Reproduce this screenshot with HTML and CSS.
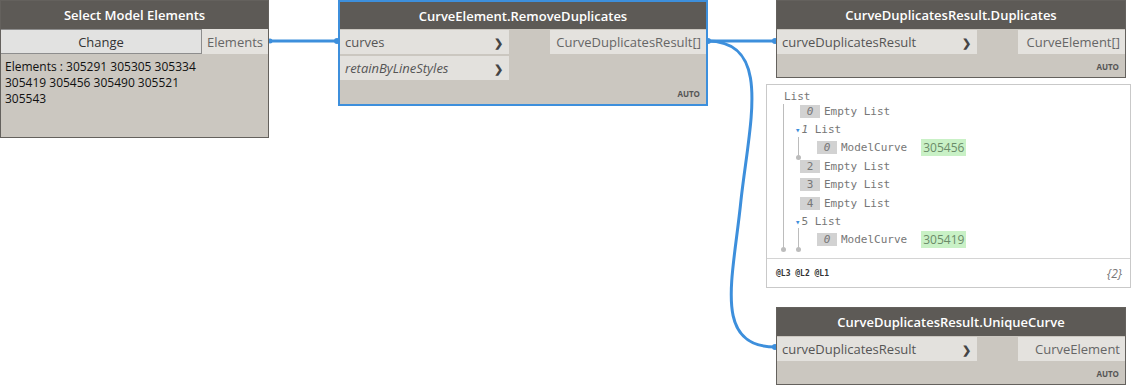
FILE: index.html
```html
<!DOCTYPE html>
<html>
<head>
    <link rel="stylesheet" href="styles.css">
    <title>Dynamo graph</title>
</head>
<body>
<div class="canvas">

    <svg class="wires" width="1133" height="385">
        <path d="M268 41 L338 41" />
        <path d="M707 41 L776 41" />
        <path d="M707 41 C 772 41, 750 120, 741 200 C 733 280, 712 347, 776 347" />
        <circle cx="270" cy="41" r="2.5" />
        <circle cx="337" cy="41" r="3" />
        <circle cx="708" cy="41" r="3" />
        <circle cx="775" cy="41" r="3" />
        <circle cx="775" cy="347" r="3" />
    </svg>

    <!-- select model elements -->
    <div class="node sel-node">
        <div class="node-head">Select Model Elements</div>
        <div class="sel-row">
            <div class="change-btn">Change</div>
            <div class="port-out">Elements</div>
        </div>
        <div class="sel-body">Elements : 305291 305305 305334<br>305419 305456 305490 305521<br>305543</div>
    </div>

    <!-- remove duplicates, selected -->
    <div class="node rd-node">
        <div class="node-head">CurveElement.RemoveDuplicates</div>
        <div class="ports">
            <div class="ins">
                <div class="port-in">curves <span class="chev">&#x276F;</span></div>
                <div class="port-in italic">retainByLineStyles <span class="chev">&#x276F;</span></div>
            </div>
            <div class="outs">
                <div class="port-out">CurveDuplicatesResult[]</div>
            </div>
        </div>
        <div class="auto">AUTO</div>
    </div>

    <div class="node dup-node">
        <div class="node-head">CurveDuplicatesResult.Duplicates</div>
        <div class="ports">
            <div class="ins small">
                <div class="port-in">curveDuplicatesResult <span class="chev">&#x276F;</span></div>
            </div>
            <div class="outs small">
                <div class="port-out">CurveElement[]</div>
            </div>
        </div>
        <div class="auto">AUTO</div>
    </div>

    <!-- watch preview under duplicates -->
    <div class="watch">
        <div class="tree">
            <div class="wl title-l">List</div>
            <div class="vline l1"></div>
            <div class="wl lvl1"><span class="idx it">0</span>Empty List</div>
            <div class="wl lvl1 sub"><span class="tri">&#x25BE;</span><i>1</i>&nbsp;List</div>
            <div class="vline l2a"></div>
            <div class="wl lvl2"><span class="idx it">0</span>ModelCurve<span class="val">305456</span></div>
            <div class="wl lvl1"><span class="idx">2</span>Empty List</div>
            <div class="wl lvl1"><span class="idx">3</span>Empty List</div>
            <div class="wl lvl1"><span class="idx">4</span>Empty List</div>
            <div class="wl lvl1 sub"><span class="tri">&#x25BE;</span>5&nbsp;List</div>
            <div class="vline l2b"></div>
            <div class="wl lvl2"><span class="idx it">0</span>ModelCurve<span class="val">305419</span></div>
        </div>
        <div class="watch-foot">
            <span class="levels">@L3 @L2 @L1</span>
            <span class="count">{2}</span>
        </div>
    </div>

    <div class="node uniq-node">
        <div class="node-head">CurveDuplicatesResult.UniqueCurve</div>
        <div class="ports">
            <div class="ins small">
                <div class="port-in">curveDuplicatesResult <span class="chev">&#x276F;</span></div>
            </div>
            <div class="outs small">
                <div class="port-out">CurveElement</div>
            </div>
        </div>
        <div class="auto">AUTO</div>
    </div>

</div>
</body>
</html>
```

FILE: styles.css
```css
body{
    margin: 0;
    background-color: white;
    font-family: "Open Sans", "Noto Sans", sans-serif;
}

.canvas{
    position: relative;
    width: 1133px;
    height: 385px;
    overflow: hidden;
}

.wires{
    position: absolute;
    left: 0;
    top: 0;
}
.wires path{
    fill: none;
    stroke: #3d8fdc;
    stroke-width: 3;
}
.wires circle{
    fill: #3d8fdc;
}

/* nodes */
.node{
    position: absolute;
    box-sizing: border-box;
    background-color: #cbc7c0;
    border: 1px solid #64615d;
    display: flex;
    flex-direction: column;
}

.node-head{
    height: 28px;
    background-color: #5d5a56;
    color: white;
    font-weight: 600;
    font-size: 13px;
    display: flex;
    align-items: center;
    justify-content: center;
    flex-shrink: 0;
}

.sel-node{
    left: 0;
    top: 0;
    width: 269px;
    height: 138px;
}
.sel-row{
    display: flex;
    height: 25px;
}
.change-btn{
    flex: 1;
    background-color: #e2e2e1;
    border: 1px solid #8d8d8d;
    border-left: none;
    display: flex;
    align-items: center;
    justify-content: center;
    font-size: 13px;
    color: #333;
}
.sel-row .port-out{
    width: 66px;
    height: 25px;
}
.sel-body{
    padding: 5px 4px;
    font-size: 12px;
    line-height: 16px;
    color: #111;
}

.port-out{
    background-color: #e4e2de;
    color: #666;
    font-size: 13px;
    height: 24px;
    display: flex;
    align-items: center;
    justify-content: flex-end;
    padding-right: 5px;
    box-sizing: border-box;
}

.ports{
    display: flex;
    justify-content: space-between;
    margin-top: 1px;
}
.ins{
    width: 169px;
    display: flex;
    flex-direction: column;
    gap: 2px;
}
.outs{
    width: 156px;
}
.ins.small{
    width: 200px;
}
.outs.small{
    width: 107px;
}

.port-in{
    height: 24px;
    background-color: #e3e1dd;
    color: #555;
    font-size: 13px;
    display: flex;
    align-items: center;
    justify-content: space-between;
    padding: 0 6px 0 5px;
}
.italic{
    font-style: italic;
}
.chev{
    font-style: normal;
    font-weight: bold;
    font-size: 11px;
    color: #444;
}

.auto{
    margin-top: auto;
    align-self: flex-end;
    font-size: 8px;
    font-weight: bold;
    color: #555;
    padding: 0 6px 5px 0;
}

.rd-node{
    left: 338px;
    top: 0;
    width: 370px;
    height: 106px;
    border: 2px solid #3d8fdc;
}
.rd-node .node-head{
    height: 27px;
}

.dup-node{
    left: 776px;
    top: 0;
    width: 350px;
    height: 78px;
}
.uniq-node{
    left: 776px;
    top: 307px;
    width: 350px;
    height: 78px;
}

/* watch */
.watch{
    position: absolute;
    left: 766px;
    top: 84px;
    width: 365px;
    height: 204px;
    box-sizing: border-box;
    border: 1px solid #c9c9c9;
    background: white;
    display: flex;
    flex-direction: column;
}
.tree{
    position: relative;
    height: 173px;
    border-bottom: 1px solid #d4d4d4;
    font-family: "DejaVu Sans Mono", monospace;
    font-size: 11px;
    color: #777;
}
.wl{
    height: 18.4px;
    display: flex;
    align-items: center;
}
.title-l{
    padding-left: 17px;
    height: 14px;
    margin-top: 4px;
    margin-bottom: -1px;
}
.lvl1{
    padding-left: 33px;
}
.lvl1.sub{
    padding-left: 28px;
}
.lvl2{
    padding-left: 50px;
}
.idx{
    display: inline-block;
    width: 20px;
    height: 13px;
    line-height: 13px;
    background-color: #d2d2d2;
    text-align: center;
    margin-right: 4px;
}
.it{
    font-style: italic;
}
.tri{
    color: #3d8fdc;
    font-size: 9px;
    margin-right: 1px;
}
.val{
    margin-left: 14px;
    background-color: #c9f1c6;
    color: #6b8b69;
    font-family: "Open Sans", sans-serif;
    font-size: 12px;
    padding: 0 2px;
    height: 17px;
    line-height: 17px;
}

.vline{
    position: absolute;
    width: 1px;
    background-color: #bcbcbc;
}
.vline::after{
    content: "";
    position: absolute;
    left: -2px;
    bottom: -3px;
    width: 5px;
    height: 5px;
    border-radius: 50%;
    background-color: #bcbcbc;
}
.l1{
    left: 16px;
    top: 19px;
    height: 145px;
}
.l2a{
    left: 31px;
    top: 52px;
    height: 20px;
}
.l2b{
    left: 31px;
    top: 143px;
    height: 21px;
}

.watch-foot{
    flex: 1;
    display: flex;
    align-items: center;
    justify-content: space-between;
    padding: 0 8px 0 9px;
}
.levels{
    font-family: "DejaVu Sans Mono", monospace;
    font-size: 8px;
    font-weight: bold;
    color: #333;
}
.count{
    font-size: 12px;
    font-style: italic;
    color: #777;
}
```
